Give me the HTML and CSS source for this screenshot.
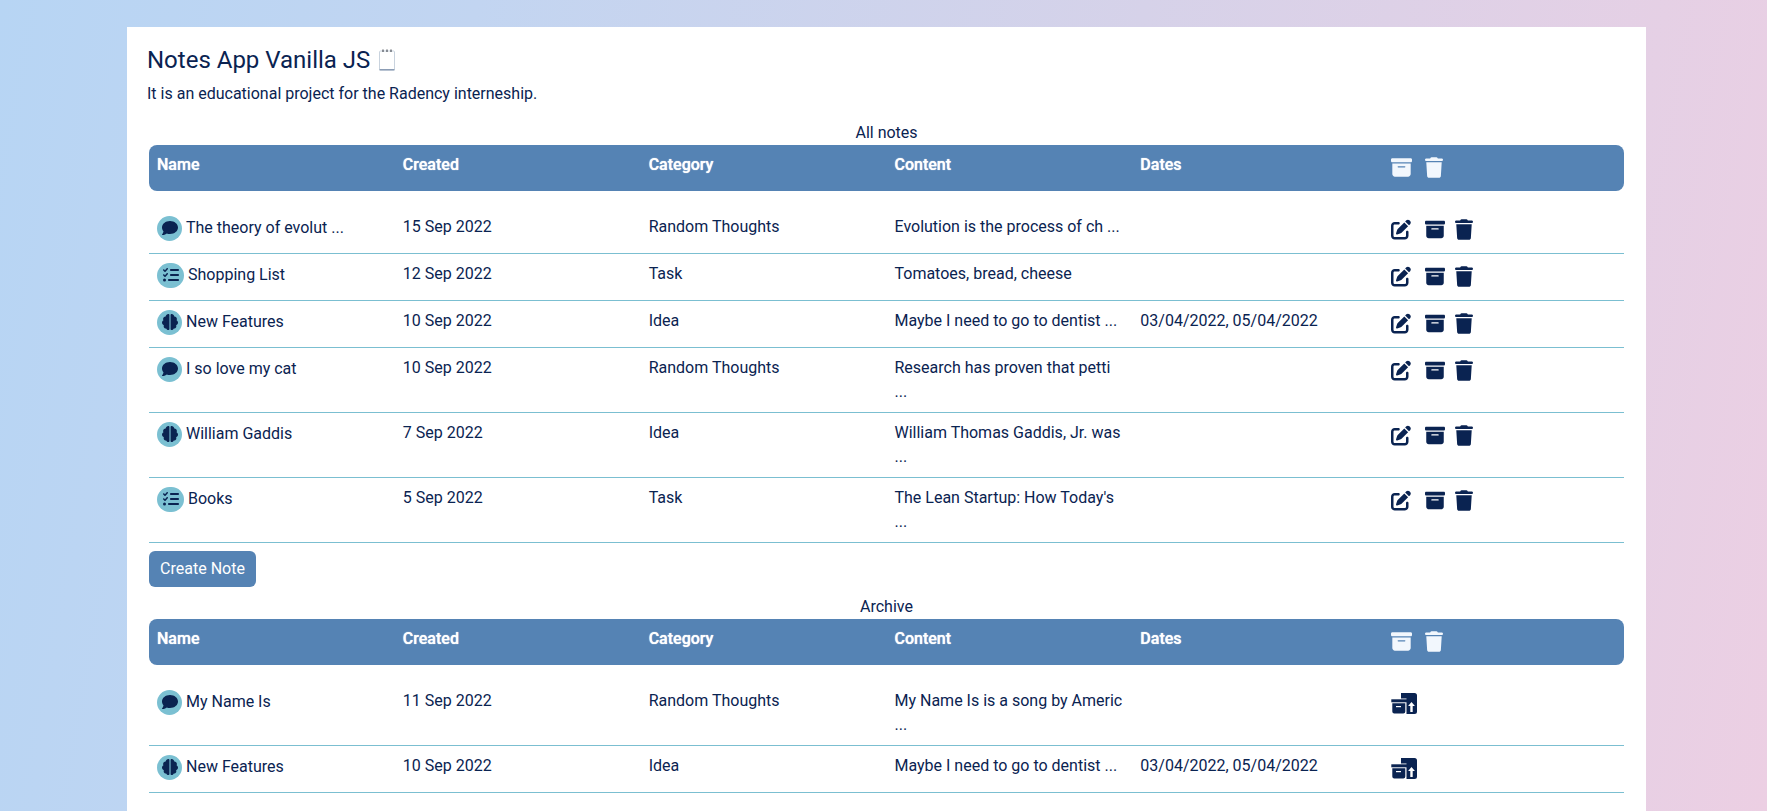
FILE: index.html
```html
<!DOCTYPE html>
<html lang="en">
<head>
  <meta charset="UTF-8" />
  <meta name="viewport" content="width=device-width, initial-scale=1.0" />
  <title>Notes App Vanilla JS</title>
  <link rel="stylesheet" href="styles.css">
</head>
<body>
  <svg class="sprite" aria-hidden="true">
    <symbol id="i-comment" viewBox="0 0 512 512"><path d="M512 240c0 114.9-114.6 208-256 208c-37.1 0-72.3-6.4-104.1-17.9c-11.9 8.7-31.3 20.6-54.3 30.6C73.6 471.1 44.7 480 16 480c-6.5 0-12.3-3.9-14.8-9.9c-2.5-6-1.1-12.8 3.4-17.4c.3-.3 .7-.7 1.6-1.7c1.1-1.2 2.8-3.1 4.9-5.7c4.1-5 9.6-12.4 15.2-21.6c10-16.6 19.5-38.4 21.4-62.9C17.7 326.8 0 285.1 0 240C0 125.1 114.6 32 256 32s256 93.1 256 208z"/></symbol>
    <symbol id="i-list" viewBox="0 0 512 512"><path d="M152.1 38.2c9.9 8.9 10.7 24 1.8 33.9l-72 80c-4.4 4.9-10.6 7.8-17.2 7.9s-12.9-2.4-17.6-7L7 113C-2.3 103.6-2.3 88.4 7 79s24.6-9.4 33.9 0l22.1 22.1 55.1-61.2c8.9-9.9 24-10.7 33.9-1.8zm0 160c9.9 8.9 10.7 24 1.8 33.9l-72 80c-4.4 4.9-10.6 7.8-17.2 7.9s-12.9-2.4-17.6-7L7 273c-9.4-9.4-9.4-24.6 0-33.9s24.6-9.4 33.9 0l22.1 22.1 55.1-61.2c8.9-9.9 24-10.7 33.9-1.8zM224 96c0-17.7 14.3-32 32-32H480c17.7 0 32 14.3 32 32s-14.3 32-32 32H256c-17.7 0-32-14.3-32-32zm0 160c0-17.7 14.3-32 32-32H480c17.7 0 32 14.3 32 32s-14.3 32-32 32H256c-17.7 0-32-14.3-32-32zM160 416c0-17.7 14.3-32 32-32H480c17.7 0 32 14.3 32 32s-14.3 32-32 32H192c-17.7 0-32-14.3-32-32zM48 368a48 48 0 1 1 0 96 48 48 0 1 1 0-96z"/></symbol>
    <symbol id="i-brain" viewBox="24 0 464 512" preserveAspectRatio="none"><path transform="translate(8 0)" d="M232 32v448c0 18-15 32-34 32c-30 0-54-20-60-48c-42 0-74-34-74-74c0-10 2-20 6-30C42 346 16 312 16 272c0-32 16-60 42-76c-6-12-10-26-10-40c0-42 32-76 74-78C130 40 164 0 198 0c19 0 34 14 34 32z"/><path transform="translate(-8 0)" d="M280 32v448c0 18 15 32 34 32c30 0 54-20 60-48c42 0 74-34 74-74c0-10-2-20-6-30c28-14 54-48 54-88c0-32-16-60-42-76c6-12 10-26 10-40c0-42-32-76-74-78C382 40 348 0 314 0c-19 0-34 14-34 32z"/></symbol>
    <symbol id="i-edit" viewBox="0 0 512 512"><path d="M471.6 21.7c-21.9-21.9-57.3-21.9-79.2 0L362.3 51.7l97.9 97.9 30.1-30.1c21.9-21.9 21.9-57.3 0-79.2L471.6 21.7zm-299.2 220c-6.1 6.1-10.8 13.6-13.5 21.9l-29.6 88.8c-2.9 8.6-.6 18.1 5.8 24.6s15.9 8.7 24.6 5.8l88.8-29.6c8.2-2.7 15.7-7.4 21.9-13.5L437.7 172.3 339.7 74.3 172.4 241.7zM96 64C43 64 0 107 0 160V416c0 53 43 96 96 96H352c53 0 96-43 96-96V320c0-17.7-14.3-32-32-32s-32 14.3-32 32v96c0 17.7-14.3 32-32 32H96c-17.7 0-32-14.3-32-32V160c0-17.7 14.3-32 32-32h96c17.7 0 32-14.3 32-32s-14.3-32-32-32H96z"/></symbol>
    <symbol id="i-archive" viewBox="0 0 512 512"><path d="M32 32H480c17.7 0 32 14.3 32 32V96c0 17.7-14.3 32-32 32H32C14.3 128 0 113.7 0 96V64C0 46.3 14.3 32 32 32zm0 128H480V416c0 35.3-28.7 64-64 64H96c-35.3 0-64-28.7-64-64V160zm128 80c0 8.8 7.2 16 16 16H336c8.8 0 16-7.2 16-16s-7.2-16-16-16H176c-8.8 0-16 7.2-16 16z"/></symbol>
    <symbol id="i-trash" viewBox="0 0 448 512"><path d="M135.2 17.7L128 32H32C14.3 32 0 46.3 0 64S14.3 96 32 96H416c17.7 0 32-14.3 32-32s-14.3-32-32-32H320l-7.2-14.3C307.4 6.8 296.3 0 284.2 0H163.8c-12.1 0-23.2 6.8-28.6 17.7zM416 128H32L53.2 467c1.6 25.3 22.6 45 47.9 45H346.9c25.3 0 46.3-19.7 47.9-45L416 128z"/></symbol>
    <symbol id="i-restore" viewBox="0 0 26 21">
      <path d="M10 0h13.500a2.500 2.500 0 0 1 2.500 2.500v16a2.500 2.500 0 0 1-2.500 2.500H15.500V5.500H10z"/>
      <path d="M20.500 9l3.400 4h-2.200V19h-2.400v-6h-2.200z" fill="#fff"/>
      <rect x="0.300" y="6.300" width="16.400" height="3"/>
      <path d="M1.300 10.300h13V18.500a2 2 0 0 1-2 2h-9a2 2 0 0 1-2-2z"/>
      <rect x="5" y="13" width="5" height="1.200" fill="#fff"/>
    </symbol>
    <symbol id="i-notepad" viewBox="0 0 16 22">
      <rect x="0.500" y="2" width="15" height="19" rx="1" fill="#fff" stroke="#c9d3de"/>
      <rect x="0.500" y="20" width="15" height="1.500" fill="#8c9db5"/>
      <path d="M4 0.500v2.500M8 0.500v2.500M12 0.500v2.500" stroke="#4a4f57" stroke-width="1.200"/>
    </symbol>
  </svg>

  <main class="page">
    <header class="intro">
      <h1>Notes App Vanilla JS <svg class="notepad"><use href="#i-notepad"></use></svg></h1>
      <p>It is an educational project for the Radency interneship.</p>
    </header>

    <table class="notes">
      <caption>All notes</caption>
      <thead>
        <tr>
          <th>Name</th>
          <th>Created</th>
          <th>Category</th>
          <th>Content</th>
          <th>Dates</th>
          <th>
            <div class="actions head-actions">
              <svg class="ic"><use href="#i-archive"></use></svg>
              <svg class="ic ic-trash"><use href="#i-trash"></use></svg>
            </div>
          </th>
        </tr>
      </thead>
      <tbody>
        <tr class="spacer"><td colspan="6"></td></tr>
        <tr>
          <td><div class="name"><span class="badge"><svg><use href="#i-comment"></use></svg></span>The theory of evolut ...</div></td>
          <td>15 Sep 2022</td>
          <td>Random Thoughts</td>
          <td>Evolution is the process of ch ...</td>
          <td></td>
          <td><div class="actions"><svg class="ic"><use href="#i-edit"></use></svg><svg class="ic"><use href="#i-archive"></use></svg><svg class="ic ic-trash"><use href="#i-trash"></use></svg></div></td>
        </tr>
        <tr>
          <td><div class="name"><span class="badge badge-wide"><svg><use href="#i-list"></use></svg></span>Shopping List</div></td>
          <td>12 Sep 2022</td>
          <td>Task</td>
          <td>Tomatoes, bread, cheese</td>
          <td></td>
          <td><div class="actions"><svg class="ic"><use href="#i-edit"></use></svg><svg class="ic"><use href="#i-archive"></use></svg><svg class="ic ic-trash"><use href="#i-trash"></use></svg></div></td>
        </tr>
        <tr>
          <td><div class="name"><span class="badge"><svg><use href="#i-brain"></use></svg></span>New Features</div></td>
          <td>10 Sep 2022</td>
          <td>Idea</td>
          <td>Maybe I need to go to dentist ...</td>
          <td>03/04/2022, 05/04/2022</td>
          <td><div class="actions"><svg class="ic"><use href="#i-edit"></use></svg><svg class="ic"><use href="#i-archive"></use></svg><svg class="ic ic-trash"><use href="#i-trash"></use></svg></div></td>
        </tr>
        <tr>
          <td><div class="name"><span class="badge"><svg><use href="#i-comment"></use></svg></span>I so love my cat</div></td>
          <td>10 Sep 2022</td>
          <td>Random Thoughts</td>
          <td>Research has proven that petti ...</td>
          <td></td>
          <td><div class="actions"><svg class="ic"><use href="#i-edit"></use></svg><svg class="ic"><use href="#i-archive"></use></svg><svg class="ic ic-trash"><use href="#i-trash"></use></svg></div></td>
        </tr>
        <tr>
          <td><div class="name"><span class="badge"><svg><use href="#i-brain"></use></svg></span>William Gaddis</div></td>
          <td>7 Sep 2022</td>
          <td>Idea</td>
          <td>William Thomas Gaddis, Jr. was ...</td>
          <td></td>
          <td><div class="actions"><svg class="ic"><use href="#i-edit"></use></svg><svg class="ic"><use href="#i-archive"></use></svg><svg class="ic ic-trash"><use href="#i-trash"></use></svg></div></td>
        </tr>
        <tr>
          <td><div class="name"><span class="badge badge-wide"><svg><use href="#i-list"></use></svg></span>Books</div></td>
          <td>5 Sep 2022</td>
          <td>Task</td>
          <td>The Lean Startup: How Today's ...</td>
          <td></td>
          <td><div class="actions"><svg class="ic"><use href="#i-edit"></use></svg><svg class="ic"><use href="#i-archive"></use></svg><svg class="ic ic-trash"><use href="#i-trash"></use></svg></div></td>
        </tr>
      </tbody>
    </table>

    <button class="create-btn">Create Note</button>

    <table class="notes">
      <caption>Archive</caption>
      <thead>
        <tr>
          <th>Name</th>
          <th>Created</th>
          <th>Category</th>
          <th>Content</th>
          <th>Dates</th>
          <th>
            <div class="actions head-actions">
              <svg class="ic"><use href="#i-archive"></use></svg>
              <svg class="ic ic-trash"><use href="#i-trash"></use></svg>
            </div>
          </th>
        </tr>
      </thead>
      <tbody>
        <tr class="spacer"><td colspan="6"></td></tr>
        <tr>
          <td><div class="name"><span class="badge"><svg><use href="#i-comment"></use></svg></span>My Name Is</div></td>
          <td>11 Sep 2022</td>
          <td>Random Thoughts</td>
          <td>My Name Is is a song by Americ ...</td>
          <td></td>
          <td><div class="actions"><svg class="ic ic-restore"><use href="#i-restore"></use></svg></div></td>
        </tr>
        <tr>
          <td><div class="name"><span class="badge"><svg><use href="#i-brain"></use></svg></span>New Features</div></td>
          <td>10 Sep 2022</td>
          <td>Idea</td>
          <td>Maybe I need to go to dentist ...</td>
          <td>03/04/2022, 05/04/2022</td>
          <td><div class="actions"><svg class="ic ic-restore"><use href="#i-restore"></use></svg></div></td>
        </tr>
      </tbody>
    </table>
  </main>
</body>
</html>
```

FILE: styles.css
```css
* {
  box-sizing: border-box;
}
html, body {
  height: 100%;
}
body {
  margin: 0;
  padding: 27px 121px 0 127px;
  overflow: hidden;
  font-family: Roboto, sans-serif;
  font-size: 16px;
  line-height: 24px;
  color: #0a2351;
  background: linear-gradient(100deg, #b7d5f4, #c2d5f1 25%, #d6d2e9 60%, #eccfe3);
}
.sprite {
  display: none;
}
.page {
  height: 100%;
  padding: 15px 19px 0;
  background: #fff;
}
.intro {
  height: 76px;
  margin-left: 1px;
}
h1 {
  margin: 0;
  font-size: 24px;
  font-weight: 400;
  line-height: 36px;
}
.notepad {
  width: 16px;
  height: 22px;
  margin-left: 3px;
  vertical-align: -3px;
}
.intro p {
  margin: 4px 0 0;
}
.notes {
  width: 1475px;
  margin: 0 3px;
  table-layout: fixed;
  border-collapse: separate;
  border-spacing: 0;
}
.notes caption {
  caption-side: top;
  height: 27px;
  padding-top: 3px;
  text-align: center;
}
.notes th {
  padding: 8px;
  height: 46px;
  background: #5583b4;
  color: #fff;
  font-weight: 500;
  text-shadow: 0 0 1px #fff;
  text-align: left;
  vertical-align: top;
}
.notes th:first-child {
  border-radius: 8px 0 0 8px;
}
.notes th:last-child {
  border-radius: 0 8px 8px 0;
}
.notes td {
  padding: 8px;
  vertical-align: top;
  border-bottom: 1px solid #7bbfd1;
}
.notes .spacer td {
  height: 16px;
  padding: 0;
  border: 0;
}
.name {
  display: flex;
  align-items: center;
  height: 26px;
  white-space: nowrap;
}
.badge {
  display: flex;
  flex: none;
  align-items: center;
  justify-content: center;
  width: 25px;
  height: 25px;
  margin-right: 4px;
  border-radius: 50%;
  background: #7bc0d2;
}
.badge svg {
  display: block;
  width: 16px;
  height: 16px;
  fill: #0a2351;
}
.badge-wide {
  width: 27px;
  border-radius: 13px;
}
.actions {
  display: flex;
  height: 30px;
  padding: 4px 0 0 5px;
  fill: #0a2351;
}
.ic {
  display: block;
  width: 20px;
  height: 21px;
  margin-right: 14px;
}
.actions .ic:nth-child(2) {
  margin-right: 10px;
}
.ic-trash {
  width: 18px;
}
.ic-restore {
  width: 26px;
}
.head-actions {
  fill: #f2f7fd;
}
.head-actions .ic:first-child {
  width: 21px;
  margin-right: 13px;
}
.create-btn {
  display: block;
  width: 107px;
  height: 36px;
  margin: 8px 0 5px 3px;
  padding: 0;
  border: 0;
  border-radius: 6px;
  background: #5583b4;
  color: #fff;
  font: 16px/24px Roboto, sans-serif;
}
```
